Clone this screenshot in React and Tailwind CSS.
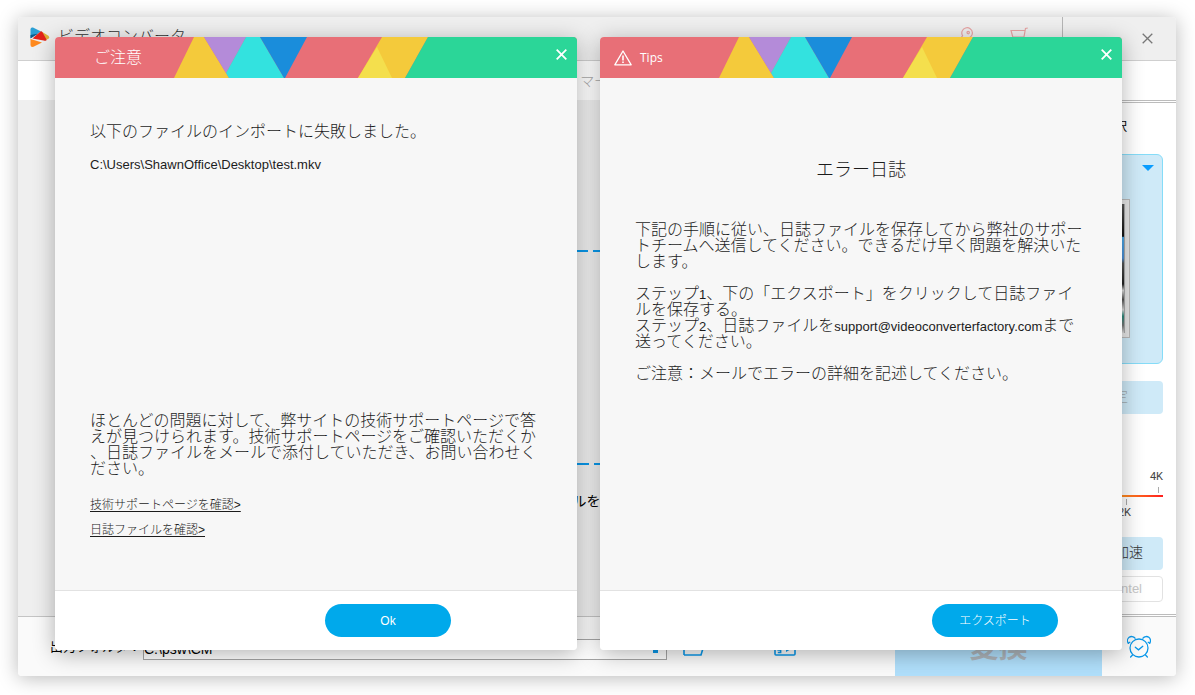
import React from 'react';

const HeaderPattern = () => (
  <svg
    className="absolute inset-0 h-full w-full"
    viewBox="0 0 522 41"
    preserveAspectRatio="none"
    aria-hidden="true"
  >
    <rect width="522" height="41" fill="#e86f77" />
    <polygon points="119,41 139,0 149,0 174,41" fill="#f4ca3b" />
    <polygon points="149,0 191,0 171,36" fill="#b48bd9" />
    <polygon points="171,36 191,0 205,0 229,41 174,41" fill="#33e2df" />
    <polygon points="205,0 252,0 230,41 229,41" fill="#1a8ddb" />
    <polygon points="303,41 327,0 373,0 350,41" fill="#f4ca3b" />
    <polygon points="303,41 322,10 337,41" fill="#f4df4d" />
    <polygon points="350,41 373,0 522,0 522,41" fill="#2bd698" />
  </svg>
);

const CrossIcon = ({ width }) => (
  <svg className="h-[11px] w-[11px]" viewBox="0 0 11 11" fill="none" stroke="currentColor" strokeWidth={width} aria-hidden="true">
    <path d="M0.7 0.7 10.3 10.3M10.3 0.7 0.7 10.3" />
  </svg>
);

const WarningIcon = () => (
  <svg className="h-4 w-[18px]" viewBox="0 0 18 16" fill="none" stroke="currentColor" strokeWidth="1.3" strokeLinejoin="round" aria-hidden="true">
    <path d="M9 1 17.2 14.8H0.8Z" />
    <path d="M9 5.5V10.5M9 11.6V13" strokeWidth="1.6" />
  </svg>
);

const Logo = () => (
  <svg className="h-5 w-5" viewBox="0 0 20 20" aria-hidden="true">
    <path d="M0.5 2.5Q0.5 0 3 0.6L11 4.5 0.5 11Z" fill="#2b9fd4" />
    <path d="M0.5 8 8.5 6.5 0.5 11.5Z" fill="#0b5c8d" />
    <path d="M11.5 4.5 18 8.5Q20.5 10.5 18 12L14.5 13.5Z" fill="#e0b23a" />
    <path d="M10.5 4.5Q11.5 3.6 12.3 5L16.5 12.6Q16.8 14 15 13.8L2.5 11.5Z" fill="#e3231b" />
    <path d="M0.5 12 12 15.5 3.5 19.8Q0.5 20.5 0.5 18Z" fill="#ff8a1e" />
  </svg>
);

const KeyIcon = () => (
  <svg className="h-5 w-4" viewBox="0 0 16 20" fill="none" stroke="currentColor" strokeWidth="1.2" aria-hidden="true">
    <path d="M4.6 8.8A5.3 5.3 0 1 1 8 11.2L7 13.5H5V16H3V18.5H0.8V13.5Z" />
    <circle cx="10.2" cy="5.6" r="1.2" />
  </svg>
);

const CartIcon = () => (
  <svg className="h-5 w-[18px]" viewBox="0 0 18 20" fill="none" stroke="currentColor" strokeWidth="1.2" aria-hidden="true">
    <path d="M17.8 1 15.5 1.5 13.5 12.5H3.5M15 3.5H1L2.8 10H14" />
    <circle cx="5" cy="15.5" r="1.3" />
    <circle cx="12" cy="15.5" r="1.3" />
  </svg>
);

const FolderIcon = () => (
  <svg className="h-[18px] w-[22px]" viewBox="0 0 22 18" fill="none" stroke="currentColor" strokeWidth="1.6" aria-hidden="true">
    <path d="M1 17V1H7L9 4H18V7M1 17H18L21 7" />
  </svg>
);

const MediaIcon = () => (
  <svg className="h-[18px] w-[22px]" viewBox="0 0 22 18" fill="none" stroke="currentColor" strokeWidth="1.6" aria-hidden="true">
    <rect x="1" y="1" width="20" height="16" rx="1" />
    <path d="M7 9.5H4.2V12H6.6V14.5H3.8" />
    <path d="M12 8.5 18 10.5 12 14Z" fill="currentColor" stroke="none" />
  </svg>
);

const AlarmIcon = () => (
  <svg className="h-6 w-6" viewBox="0 0 24 24" fill="none" stroke="currentColor" strokeWidth="1.3" strokeLinecap="round" aria-hidden="true">
    <circle cx="12" cy="13" r="9" />
    <path d="M8.3 12.2 11.5 14.8 15.8 11.3" />
    <path d="M1.3 8.2A4 4 0 1 1 8 3.2M22.7 8.2A4 4 0 1 0 16 3.2" />
    <path d="M1.3 8.2 2.8 7.3M22.7 8.2 21.2 7.3M5.5 20 3.6 22M18.5 20 20.4 22" />
  </svg>
);

const Dialog = ({ title, icon, action, footerClass, children }) => (
  <section
    role="dialog"
    aria-label={title}
    className="flex min-w-0 flex-1 flex-col overflow-hidden rounded-[4px] bg-[#f7f7f7] text-[#1c1c1c] shadow-[0_4px_22px_rgba(0,0,0,0.3)]"
  >
    <header className="relative flex h-[41px] text-white">
      <HeaderPattern />
      <div className="relative flex flex-1 items-center gap-2 pl-3.5">
        {icon ? (
          <>
            {icon}
            <h2 className="font-['Open_Sans',sans-serif] text-xs">{title}</h2>
          </>
        ) : (
          <h2 className="pl-[25px] text-base font-light">{title}</h2>
        )}
      </div>
      <button type="button" aria-label="閉じる" className="relative mt-3 mr-2.5 self-start">
        <CrossIcon width={1.8} />
      </button>
    </header>
    <div className="flex min-h-[512px] flex-col px-[35px]">{children}</div>
    <footer className={`flex h-[60px] items-center justify-end border-t border-[#e2e2e2] bg-white ${footerClass}`}>
      <button type="button" className="h-[33px] w-[126px] rounded-full bg-[#00a9eb] text-xs font-light text-white">
        {action}
      </button>
    </footer>
  </section>
);

const SidePanel = () => (
  <aside className="flex w-[281px] flex-col border-y-[3px] border-double border-[#bcbcbc] bg-white px-[13px]">
    <h3 className="pt-4 pr-9 pb-[19px] text-right text-xs leading-4 text-black">出力形式の選択</h3>
    <div className="flex h-[210px] justify-end rounded-md border border-[#85dcf8] bg-[#cfeaf8]">
      <div className="mt-11 h-[139px] w-24 border border-[#b9b9b9] bg-[#e6e6e6] p-1">
        <div className="h-full border-r border-[#aaa] bg-[linear-gradient(#555_0%,#111_25%,#4aa8e8_26%,#4d8fd6_42%,#555_46%,#222_62%,#ddd_67%,#555_74%,#ddd_82%,#2c8a7c_87%,#777_94%,#ddd_100%)]" />
      </div>
      <button type="button" aria-label="形式を開く" className="mt-2.5 mr-2 ml-3 self-start">
        <svg className="h-1.5 w-3" viewBox="0 0 12 6" fill="#0a9dff" aria-hidden="true">
          <path d="M0 0H12L6 6Z" />
        </svg>
      </button>
    </div>
    <button type="button" className="mt-[17px] h-[33px] rounded-sm bg-[#cfeaf8] pr-[35px] pb-1 text-right text-sm font-light text-[#a5aeb3]">
      設定
    </button>
    <div className="mt-[55px] flex flex-col items-end font-['Roboto',sans-serif] text-[11px] text-[#444]">
      <span className="leading-4">4K</span>
      <span className="mt-0.5 mr-1 h-1.5 w-px bg-[#aaa]" />
      <span className="mt-0.5 h-0.5 w-full bg-[linear-gradient(to_right,#7ac943,#ff9a1e_82%,#ff1e1e)]" />
      <span className="mt-0.5 mr-9 h-1.5 w-px bg-[#aaa]" />
      <span className="mr-8 leading-4">2K</span>
    </div>
    <button type="button" className="mt-4 h-[33px] rounded-sm bg-[#cfeaf8] pr-5 pb-1 text-right text-sm font-light text-[#333]">
      加速
    </button>
    <button type="button" className="mt-1.5 mb-3 h-[26px] rounded-sm border border-[#e2e2e2] pr-5 text-right text-[13px] text-[#c8c8c8]">
      Intel
    </button>
  </aside>
);

const ConverterWindow = () => (
  <main className="overflow-hidden rounded-[4px] bg-white shadow-[0_2px_20px_rgba(0,0,0,0.28)]">
    <header className="flex h-11 items-center border-b border-[#cfcfcf] bg-[#efefef] text-[#e8a3a3]">
      <div className="flex flex-1 items-center gap-2 pb-1 pl-3">
        <Logo />
        <h1 className="text-base leading-5 font-light text-[#333]">ビデオコンバータ</h1>
      </div>
      <button type="button" aria-label="登録" className="mr-9 pb-1"><KeyIcon /></button>
      <button type="button" aria-label="購入" className="mr-[34px] pb-1"><CartIcon /></button>
      <div className="flex h-full items-center border-l border-[#b5b5b5] text-[#777]">
        <button type="button" aria-label="最小化" className="ml-[31px] h-0.5 w-3 bg-[#999]" />
        <button type="button" aria-label="ウィンドウを閉じる" className="mr-[23px] ml-9">
          <CrossIcon width={1.3} />
        </button>
      </div>
    </header>
    <nav className="flex h-[39px] items-center justify-center pl-2 text-sm font-light text-[#aaa]">
      <a href="#merge">マージ</a>
    </nav>
    <div className="flex">
      <div className="flex flex-1 flex-col items-center border-b border-[#c4c4c4] bg-[#efefef] px-16 pt-[150px]">
        <svg className="h-[215px] w-full" aria-hidden="true">
          <rect x="1" y="1" width="99%" height="213" fill="none" stroke="#0a98ea" strokeWidth="2" strokeDasharray="12 5" />
        </svg>
        <p className="mt-[26px] pl-[218px] text-sm leading-5 text-black">ファイルを</p>
      </div>
      <SidePanel />
    </div>
    <footer className="flex h-[59px] items-center bg-[#fafafa] pl-8 text-[#0a98ea]">
      <label htmlFor="output" className="w-[93px] text-[13px] whitespace-nowrap text-black">出力フォルダ：</label>
      <select id="output" className="mt-[5px] h-[21px] flex-1 appearance-none border border-[#a5a5a5] bg-white bg-[linear-gradient(#0a98ea,#0a98ea)] bg-[length:5px_4px] bg-[position:right_8px_bottom_6px] bg-no-repeat text-sm leading-4 text-black">
        <option>C:\psw\CM</option>
      </select>
      <button type="button" aria-label="フォルダを開く" className="ml-4"><FolderIcon /></button>
      <button type="button" aria-label="メディア" className="ml-[69px]"><MediaIcon /></button>
      <button type="button" className="ml-[99px] h-full w-[207px] bg-[#b0dffb] pt-1 text-[29px] font-bold text-[#adb5bb]">変換</button>
      <button type="button" aria-label="タイマー" className="flex w-[74px] justify-center"><AlarmIcon /></button>
    </footer>
  </main>
);

const App = () => {
  const path = 'C:\\Users\\ShawnOffice\\Desktop\\test.mkv';

  return (
    <div className="relative bg-white pt-[17px] pr-[19px] pb-[19px] pl-[18px] font-['Liberation_Sans','Noto_Sans_CJK_JP',sans-serif]">
      <ConverterWindow />

      <div className="absolute inset-x-0 top-0 flex items-start gap-[23px] pt-[37px] pr-[73px] pl-[55px]">
        <Dialog title="ご注意" action="Ok" footerClass="pr-[126px]">
          <p className="mt-[46px] text-base leading-4 font-light">以下のファイルのインポートに失敗しました。</p>
          <p className="mt-[15px] text-[13px] leading-5">{path}</p>
          <p className="mt-auto text-base leading-4 font-light whitespace-nowrap">
            ほとんどの問題に対して、弊サイトの技術サポートページで答<br />
            えが見つけられます。技術サポートページをご確認いただくか<br />
            、日誌ファイルをメールで添付していただき、お問い合わせく<br />
            ださい。
          </p>
          <div className="mt-5 mb-[52px] flex flex-col items-start gap-[9px] text-xs leading-4 font-light">
            <a href="#support" className="underline underline-offset-2">技術サポートページを確認&gt;</a>
            <a href="#log" className="underline underline-offset-2">日誌ファイルを確認&gt;</a>
          </div>
        </Dialog>

        <Dialog title="Tips" icon={<WarningIcon />} action="エクスポート" footerClass="pr-16">
          <h3 className="mt-[82px] text-center text-lg leading-5 font-light">エラー日誌</h3>
          <div className="mt-[42px] flex flex-col gap-4 text-base leading-4 font-light whitespace-nowrap">
            <p>
              下記の手順に従い、日誌ファイルを保存してから弊社のサポー<br />
              トチームへ送信してください。できるだけ早く問題を解決いた<br />
              します。
            </p>
            <p>
              ステップ<span className="text-[13px] leading-none">1</span>、下の「エクスポート」をクリックして日誌ファイ<br />
              ルを保存する。<br />
              ステップ<span className="text-[13px] leading-none">2</span>、日誌ファイルを<span className="text-[13px] leading-none">support@videoconverterfactory.com</span>まで<br />
              送ってください。
            </p>
            <p>ご注意：メールでエラーの詳細を記述してください。</p>
          </div>
        </Dialog>
      </div>
    </div>
  );
};

export default App;
